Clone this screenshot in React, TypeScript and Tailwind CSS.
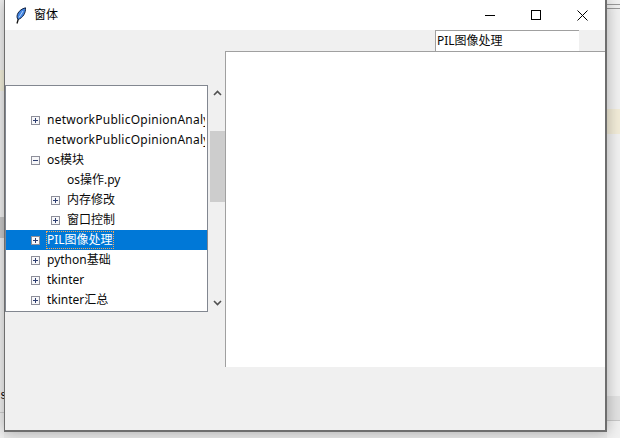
const font = { fontFamily: '"Noto Sans", "Noto Sans CJK SC", sans-serif' };

function Expander({ open }: { open?: boolean }) {
  return (
    <svg width="9" height="9" viewBox="0 0 9 9" className="shrink-0">
      <rect x="0.5" y="0.5" width="8" height="8" fill="#f7f7f9" stroke="#8e8f9a" />
      <path d={open ? "M2 4.5H7" : "M2 4.5H7M4.5 2V7"} stroke="#2f3f70" fill="none" />
    </svg>
  );
}

function Row({ level = 0, label, exp, open, selected, clipped }: { level?: number; label?: string; exp?: boolean; open?: boolean; selected?: boolean; clipped?: boolean }) {
  return (
    <div className={`flex h-5 items-center whitespace-nowrap ${selected ? "bg-[#0078d7] text-white" : "text-[#0a0a0a]"}`}>
      <div className={`flex w-[20px] shrink-0 justify-start pl-[5px] ${level === 1 ? "ml-[40px]" : "ml-[20px]"}`}>
        {exp && <Expander open={open} />}
      </div>
      <span className={`h-[18px] px-px leading-[17px] ${selected ? "outline outline-1 -outline-offset-1 outline-dotted outline-[#f2a65a]" : ""} ${clipped ? "w-[159px] overflow-hidden tracking-[0.24px]" : ""}`}>{label}</span>
    </div>
  );
}

export default function App() {
  return (
    <div className="flex h-[438px] w-[620px] overflow-hidden bg-[#f1f1f1] text-[12px]" style={font}>
      {/* left desktop strip */}
      <div className="flex w-1 shrink-0 flex-col overflow-hidden">
        <div className="h-[70px] shrink-0" />
        <div className="h-[21px] shrink-0 bg-[#f4f1dc]" />
        <div className="h-[126px] shrink-0" />
        <div className="h-[21px] shrink-0 bg-[#c9c9c9]" />
        <div className="h-[150px] shrink-0" />
        <div className="h-[16px] shrink-0 text-[12px] leading-[16px] text-black" style={{ fontFamily: '"Liberation Mono", monospace' }}>
          s
        </div>
        <div className="h-[8px] shrink-0" />
        <div className="h-px shrink-0 bg-[#d0d0d0]" />
      </div>

      {/* window column */}
      <div className="flex w-[603px] shrink-0 flex-col">
        <div className="relative z-10 flex h-[432px] w-[603px] shrink-0 flex-col border-b-2 border-l border-r-2 border-[#6e6e6e] bg-[#f0f0f0] shadow-[0_0_14px_rgba(0,0,0,0.3)]">
          {/* title bar */}
          <div className="flex h-[30px] shrink-0 items-center bg-white">
            <svg width="12" height="17" viewBox="0 0 12 17" className="ml-[10px] mt-[1px] shrink-0">
              <path d="M2 16.5 L3.6 11" stroke="#111" strokeWidth="1.3" fill="none" />
              <path d="M3 12.5 C0.2 9 3.5 2.5 10.5 0.8 C11 5.5 8 11 3 12.5 Z" fill="#3f82e0" stroke="#14233f" strokeWidth="1" />
              <path d="M4 10.5 L8 4" stroke="#b4d2f7" strokeWidth="1" fill="none" />
            </svg>
            <span className="ml-[7px] text-[12px] text-black">窗体</span>
            <div className="ml-auto flex h-full">
              <div className="flex w-[46px] items-center justify-center">
                <svg width="10" height="10" viewBox="0 0 10 10"><path d="M0 5.5H10" stroke="#000" /></svg>
              </div>
              <div className="flex w-[46px] items-center justify-center">
                <svg width="10" height="10" viewBox="0 0 10 10"><rect x="0.5" y="0.5" width="9" height="9" fill="none" stroke="#000" /></svg>
              </div>
              <div className="flex w-[46px] items-center justify-center">
                <svg width="11" height="11" viewBox="0 0 11 11"><path d="M0.5 0.5L10.5 10.5M10.5 0.5L0.5 10.5" stroke="#000" /></svg>
              </div>
            </div>
          </div>

          {/* client */}
          <div className="flex min-h-0 flex-1">
            {/* tree + scrollbar */}
            <div className="flex w-[220px] shrink-0 pt-[55px]">
              <div className="h-[227px] w-[203px] shrink-0 overflow-hidden border border-[#828790] bg-white pt-[24px]">
                <Row exp clipped label="networkPublicOpinionAnalysis" />
                <Row clipped label="networkPublicOpinionAnalysis" />
                <Row exp open label="os模块" />
                <Row level={1} label="os操作.py" />
                <Row level={1} exp label="内存修改" />
                <Row level={1} exp label="窗口控制" />
                <Row exp selected label="PIL图像处理" />
                <Row exp label="python基础" />
                <Row exp label="tkinter" />
                <Row exp label="tkinter汇总" />
              </div>
              <div className="flex h-[227px] w-[17px] shrink-0 flex-col items-center pl-px">
                <svg width="9" height="6" viewBox="0 0 9 6" className="mt-[5px] shrink-0">
                  <path d="M1 5L4.5 1.5L8 5" fill="none" stroke="#505050" strokeWidth="1.6" />
                </svg>
                <div className="mt-[35px] h-[71px] w-[15px] shrink-0 bg-[#cdcdcd]" />
                <svg width="9" height="6" viewBox="0 0 9 6" className="mt-[98px] shrink-0">
                  <path d="M1 1L4.5 4.5L8 1" fill="none" stroke="#505050" strokeWidth="1.6" />
                </svg>
              </div>
            </div>

            {/* right column */}
            <div className="flex min-w-0 flex-1 flex-col">
              <div className="flex h-[21px] shrink-0">
                <div className="ml-[210px] h-[21px] w-[144px] border-l border-t border-[#a0a0a0] bg-white pl-px text-[12px] leading-[19px] text-[#0a0a0a]">
                  PIL图像处理
                </div>
              </div>
              <div className="h-[316px] shrink-0 border-l border-t border-[#a0a0a0] bg-white" />
            </div>
          </div>
        </div>
        {/* strip below the window */}
        <div className="h-[6px] shrink-0 bg-[#eaeaea]" />
      </div>

      {/* right desktop strip */}
      <div className="flex min-w-0 flex-1 flex-col">
        <div className="h-1 shrink-0" />
        <div className="h-px shrink-0 bg-[#9a9a9a]" />
        <div className="h-[3px] shrink-0" />
        <div className="h-px shrink-0 bg-[#9a9a9a]" />
        <div className="h-[100px] shrink-0" />
        <div className="h-[25px] shrink-0 bg-[#f2ecd8]" />
        <div className="h-[262px] shrink-0" />
        <div className="h-[24px] shrink-0 bg-[#e2e2e2]" />
        <div className="h-px shrink-0 bg-[#c8c8c8]" />
      </div>
    </div>
  );
}
